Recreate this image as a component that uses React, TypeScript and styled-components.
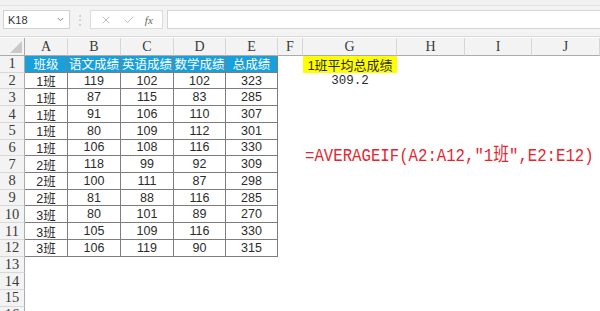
import styled, { createGlobalStyle } from "styled-components";
import { X, Check, ChevronDown } from "lucide-react";

const GlobalStyle = createGlobalStyle`
  html, body {
    margin: 0;
    padding: 0;
    background: #ffffff;
  }
  * {
    box-sizing: border-box;
  }
`;

const COLUMN_WIDTHS = [25, 43, 53, 53, 52, 52, 25, 94, 68, 67, 68];
const COLUMN_LETTERS = ["A", "B", "C", "D", "E", "F", "G", "H", "I", "J"];
const ROW_COUNT = 16;

const HEADINGS = ["班级", "语文成绩", "英语成绩", "数学成绩", "总成绩"];

const SCORES: [string, number, number, number, number][] = [
  ["1班", 119, 102, 102, 323],
  ["1班", 87, 115, 83, 285],
  ["1班", 91, 106, 110, 307],
  ["1班", 80, 109, 112, 301],
  ["1班", 106, 108, 116, 330],
  ["2班", 118, 99, 92, 309],
  ["2班", 100, 111, 87, 298],
  ["2班", 81, 88, 116, 285],
  ["3班", 80, 101, 89, 270],
  ["3班", 105, 109, 116, 330],
  ["3班", 106, 119, 90, 315],
];

const PageS = styled.div`
  position: relative;
  width: 600px;
  height: 311px;
  overflow: hidden;
  background: #ffffff;
  font-family: "Liberation Sans", "Noto Sans CJK SC", sans-serif;
`;

const RibbonS = styled.div`
  height: 6px;
  background: #f1f1f1;
  border-bottom: 1px solid #e2e2e2;
`;

const FormulaBarS = styled.div`
  display: flex;
  align-items: flex-start;
  height: 31px;
  padding: 4px 0 0 3px;
  background: #f3f3f3;
  border-bottom: 1px solid #dadada;
`;

const NameBoxS = styled.div`
  display: flex;
  align-items: center;
  justify-content: space-between;
  width: 67px;
  height: 19px;
  padding: 0 4px 0 4px;
  background: #ffffff;
  border: 1px solid #d2d2d2;
  font-size: 11px;
  color: #333333;
`;

const DividerS = styled.div`
  width: 20px;
  height: 19px;
  display: flex;
  align-items: center;
  justify-content: center;
  color: #c4c4c4;
  font-size: 12px;
`;

const EditButtonsS = styled.div`
  display: flex;
  align-items: center;
  justify-content: space-around;
  width: 73px;
  height: 19px;
  padding: 0 4px;
  background: #ffffff;
  border: 1px solid #dcdcdc;
  color: #a8a8a8;
`;

const FxS = styled.span`
  font-family: "Liberation Serif", serif;
  font-style: italic;
  font-size: 11px;
  color: #666666;
`;

const FormulaInputS = styled.div`
  flex: 1;
  height: 19px;
  margin-left: 4px;
  background: #ffffff;
  border: 1px solid #d6d6d6;
  border-right: 0;
`;

const SheetS = styled.div`
  display: grid;
  grid-template-columns: ${COLUMN_WIDTHS.map((w) => `${w}px`).join(" ")};
  grid-template-rows: 18px repeat(${ROW_COUNT}, 16.72px);
  margin-top: 1px;
`;

const CornerS = styled.div`
  position: relative;
  background: #f3f3f3;
  border-right: 1px solid #ababab;
  border-bottom: 1px solid #ababab;

  &::after {
    content: "";
    position: absolute;
    right: 2px;
    bottom: 2px;
    border-left: 12px solid transparent;
    border-bottom: 12px solid #c9c9c9;
  }
`;

const ColumnHeadS = styled.div`
  display: flex;
  align-items: center;
  justify-content: center;
  background: #f3f3f3;
  border-right: 1px solid #d6d6d6;
  border-bottom: 1px solid #ababab;
  font-family: "Liberation Serif", serif;
  font-size: 14px;
  color: #3a3a3a;
`;

const RowHeadS = styled.div`
  display: flex;
  align-items: center;
  justify-content: center;
  background: #f3f3f3;
  border-right: 1px solid #ababab;
  border-bottom: 1px solid #d8d8d8;
  font-family: "Liberation Serif", serif;
  font-size: 14.5px;
  color: #3a3a3a;
`;

const TableCellS = styled.div<{ $head?: boolean }>`
  display: flex;
  align-items: center;
  justify-content: center;
  border-right: 1px solid #7d7d7d;
  border-bottom: 1px solid #7d7d7d;
  background: ${(p) => (p.$head ? "#17a0dc" : "#ffffff")};
  color: ${(p) => (p.$head ? "#ffffff" : "#2b2b2b")};
  font-family: "Liberation Sans", "Noto Sans CJK SC", sans-serif;
  font-size: 12.5px;
  white-space: nowrap;
  overflow: hidden;
`;

const EmptyCellS = styled.div<{ $highlight?: boolean }>`
  display: flex;
  align-items: center;
  justify-content: center;
  background: ${(p) => (p.$highlight ? "#ffff00" : "transparent")};
  font-family: "Liberation Sans", "Noto Sans CJK SC", sans-serif;
  font-size: 13px;
  color: #2b2b2b;
  white-space: nowrap;
`;

const AverageS = styled.span`
  font-family: "Liberation Mono", "Noto Sans CJK SC", monospace;
  font-size: 12.5px;
  color: #2b2b2b;
`;

const FormulaNoteS = styled.div`
  position: absolute;
  left: 305px;
  top: 146px;
  font-family: "Liberation Mono", "Noto Sans CJK SC", monospace;
  font-size: 15.7px;
  line-height: 16px;
  color: #e3262e;
  white-space: nowrap;
  transform: scaleY(1.22);
  transform-origin: left top;
`;

const OTHER_COLUMNS = 5; // F..J

const renderSideCells = (row: number) =>
  Array.from({ length: OTHER_COLUMNS }, (_, i) => {
    const key = `r${row}-x${i}`;
    if (i === 1 && row === 1) {
      return (
        <EmptyCellS key={key} $highlight>
          1班平均总成绩
        </EmptyCellS>
      );
    }
    if (i === 1 && row === 2) {
      return (
        <EmptyCellS key={key}>
          <AverageS>309.2</AverageS>
        </EmptyCellS>
      );
    }
    return <EmptyCellS key={key} />;
  });

export default function App() {
  return (
    <>
      <GlobalStyle />
      <PageS>
        <RibbonS />

        <FormulaBarS>
          <NameBoxS>
            K18
            <ChevronDown size={9} color="#777" strokeWidth={2.5} />
          </NameBoxS>
          <DividerS>⋮</DividerS>
          <EditButtonsS>
            <X size={12} strokeWidth={1.5} />
            <Check size={12} strokeWidth={1.5} />
            <FxS>fx</FxS>
          </EditButtonsS>
          <FormulaInputS />
        </FormulaBarS>

        <SheetS>
          <CornerS />
          {COLUMN_LETTERS.map((letter) => (
            <ColumnHeadS key={letter}>{letter}</ColumnHeadS>
          ))}

          <RowHeadS>1</RowHeadS>
          {HEADINGS.map((h) => (
            <TableCellS key={h} $head>
              {h}
            </TableCellS>
          ))}
          {renderSideCells(1)}

          {SCORES.map((score, idx) => {
            const row = idx + 2;
            return [
              <RowHeadS key={`h${row}`}>{row}</RowHeadS>,
              ...score.map((value, c) => (
                <TableCellS key={`r${row}c${c}`}>{value}</TableCellS>
              )),
              ...renderSideCells(row),
            ];
          })}

          {Array.from({ length: ROW_COUNT - 12 }, (_, i) => {
            const row = 13 + i;
            return [
              <RowHeadS key={`h${row}`}>{row}</RowHeadS>,
              ...Array.from({ length: 10 }, (_, c) => (
                <EmptyCellS key={`r${row}c${c}`} />
              )),
            ];
          })}
        </SheetS>

        <FormulaNoteS>=AVERAGEIF(A2:A12,"1班",E2:E12)</FormulaNoteS>
      </PageS>
    </>
  );
}
